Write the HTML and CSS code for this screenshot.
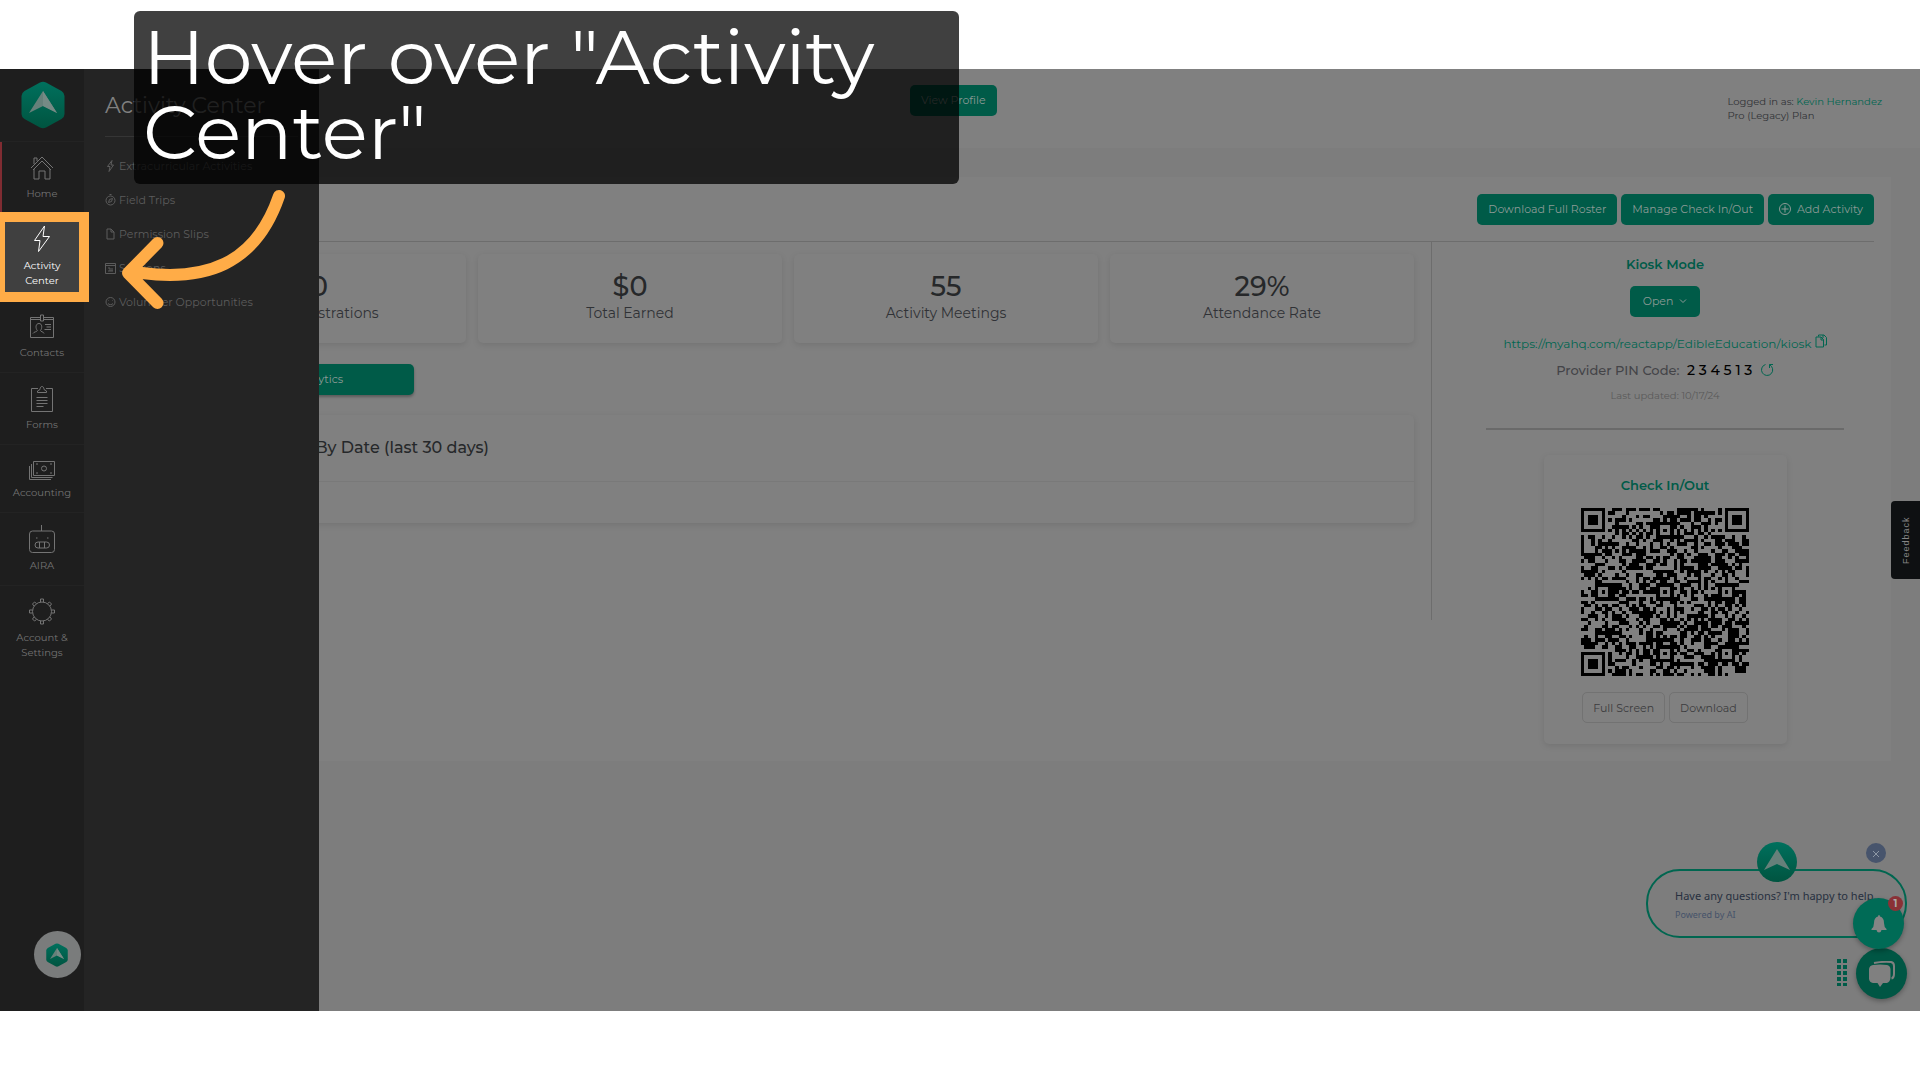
FILE: index.html
```html
<!DOCTYPE html>
<html lang="en">
<head>
    <meta charset="UTF-8">
    <meta name="viewport" content="width=device-width, initial-scale=1.0">
    <title>Activity Center</title>
    <link rel="stylesheet" href="styles.css">
</head>
<body>
    <!-- shared logo -->
    <svg width="0" height="0" class="defs">
        <defs>
            <linearGradient id="logo-green" x1="0" y1="0" x2="0" y2="1">
                <stop offset="0" stop-color="#00705d"/>
                <stop offset="1" stop-color="#005440"/>
            </linearGradient>
            <symbol id="logo" viewBox="0 0 44 48">
                <path d="M19 1.500Q22 0 25 1.500L40.500 10Q43.500 12 43.500 15V33Q43.500 36 40.500 38L25 46.500Q22 48 19 46.500L3.500 38Q.5 36 .5 33V15Q.5 12 3.500 10Z" fill="url(#logo-green)"/>
                <path d="M22 10L36 32L22 25L8 32Z" fill="#66807a"/>
                <path d="M22 10L36 32L22 25Z" fill="#758a85"/>
            </symbol>
        </defs>
    </svg>

    <div class="stage">
        <nav class="sidebar">
            <a href="#" class="logo" aria-label="Dashboard"><svg width="44" height="48"><use href="#logo"/></svg></a>
            <a href="#" class="nav-item current">
                <svg width="28" height="28" viewBox="0 0 28 28"><path d="M3 15L14 4L25 15M5 17L14 8L23 17M6 11V5H9V8M6 16V26H11V18H17V26H22V16"/></svg>
                <span>Home</span>
            </a>
            <a href="#" class="nav-item active">
                <svg width="28" height="28" viewBox="0 0 28 28"><path d="M16.500 1L6.500 15.500H12L10.500 26.500L21.500 11.500H15Z"/></svg>
                <span>Activity<br>Center</span>
            </a>
            <a href="#" class="nav-item">
                <svg width="28" height="28" viewBox="0 0 28 28"><path d="M12 5.500H2.500V25.500H25.500V5.500H16M2.500 7.500H12M16 7.500H25.500M12.500 3H15.500V9H12.500ZM5 21.500C6 19.500 9 20 9.300 18.500C7.500 16.500 7.300 11.500 11 11.500C14.500 11.500 14.200 16.500 12.500 18.500C12.700 20 15.500 19.500 16 21.500M17 12.500H23M18.500 15H23M16.500 17.500H23"/></svg>
                <span>Contacts</span>
            </a>
            <a href="#" class="nav-item">
                <svg width="28" height="28" viewBox="0 0 28 28"><path d="M10 4.500H3.500V27.500H24.500V4.500H18M9.500 8.500V7L12 5.500C12 1.500 16 1.500 16 5.500L18.500 7V8.500ZM8.500 13.500H19.500M8.500 16.500H19.500M8.500 19.500H19.500M8.500 22.500H15.500"/></svg>
                <span>Forms</span>
            </a>
            <a href="#" class="nav-item">
                <svg width="28" height="24" viewBox="0 0 28 24"><path d="M5.500 5.500H26.500V19.500H5.500ZM3.500 8V21.500H24.500M1.500 10V23.500H23M8 8H10M22 8H24M8 17H10M22 17H24"/><circle cx="16" cy="12.500" r="2.500"/></svg>
                <span>Accounting</span>
            </a>
            <a href="#" class="nav-item">
                <svg width="28" height="29" viewBox="0 0 28 29"><path d="M13.500 1V7"/><rect x="1.500" y="7" width="25" height="21.500" rx="3"/><rect x="7" y="18" width="14.500" height="6" rx="3"/><path d="M11.500 18V24M16.500 18V24M8 14H9.500M19 14H20.500"/></svg>
                <span>AIRA</span>
            </a>
            <a href="#" class="nav-item">
                <svg width="28" height="28" viewBox="0 0 28 28"><circle cx="14" cy="14.500" r="9.500"/><path d="M12.500 5V2H15.500V5M12.500 24V27H15.500V24M4.500 13H1.500V16H4.500M23.500 13H26.500V16H23.500M6 9L4.500 7L6.500 5L8.500 6.500M19.500 6.500L21.500 5L23.500 7L22 9M6 20L4.500 22L6.500 24L8.500 22.500M19.500 22.500L21.500 24L23.500 22L22 20"/></svg>
                <span>Account &amp;<br>Settings</span>
            </a>
        </nav>

        <div class="content">
            <header class="topbar">
                <button type="button" class="btn">View Profile</button>
                <div class="account">
                    Logged in as: <a href="#">Kevin Hernandez</a><br>
                    Pro (Legacy) Plan
                </div>
            </header>

            <main class="panel">
                <div class="actions">
                    <button type="button" class="btn">Download Full Roster</button>
                    <button type="button" class="btn">Manage Check In/Out</button>
                    <button type="button" class="btn"><svg width="12" height="12" viewBox="0 0 12 12"><circle cx="6" cy="6" r="5.500"/><path d="M6 2.500V9.500M2.500 6H9.500"/></svg> Add Activity</button>
                </div>

                <div class="columns">
                    <section class="stats">
                        <div class="cards">
                            <div class="card"><strong>10</strong><span>Total Registrations</span></div>
                            <div class="card"><strong>$0</strong><span>Total Earned</span></div>
                            <div class="card"><strong>55</strong><span>Activity Meetings</span></div>
                            <div class="card"><strong>29%</strong><span>Attendance Rate</span></div>
                        </div>
                        <button type="button" class="btn analytics">View More Analytics</button>
                        <div class="chart">
                            <h2>Registrations By Date (last 30 days)</h2>
                        </div>
                    </section>

                    <aside class="kiosk">
                        <h3>Kiosk Mode</h3>
                        <button type="button" class="btn open">Open <svg width="8" height="8" viewBox="0 0 8 8"><path d="M1 2.500L4 5.500L7 2.500"/></svg></button>
                        <p class="kiosk-url"><a href="#">https://myahq.com/reactapp/EdibleEducation/kiosk</a>
                            <svg width="12" height="14" viewBox="0 0 12 14"><path d="M3.500 2.500V1H9L11.500 3.500V11H9.500M1 3H6L8.500 5.500V13H1ZM6 3V6H8.500M8 1V4"/></svg>
                        </p>
                        <p class="pin">Provider PIN Code: <b>2 3 4 5 1 3</b>
                            <svg width="14" height="14" viewBox="0 0 14 14"><path d="M5.500 1.500A5.600 5.600 0 1 0 9.500 1.800M9.500 5V1.500H13"/></svg>
                        </p>
                        <p class="updated">Last updated: 10/17/24</p>
                        <hr>
                        <div class="checkin">
                            <h3>Check In/Out</h3>
                            <svg id="qr" width="168" height="168" viewBox="0 0 49 49" role="img" aria-label="Check in QR code"></svg>
                            <div class="checkin-actions">
                                <button type="button" class="btn-outline">Full Screen</button>
                                <button type="button" class="btn-outline">Download</button>
                            </div>
                        </div>
                    </aside>
                </div>
            </main>
        </div>

        <div class="submenu">
            <h1>Activity Center</h1>
            <ul>
                <li><a href="#"><svg width="11" height="12" viewBox="0 0 11 12"><path d="M7 .5L2.500 6.500H5L4 11.500L8.500 5H6Z"/></svg>Extracurricular Activities</a></li>
                <li><a href="#"><svg width="11" height="12" viewBox="0 0 11 12"><circle cx="5.500" cy="6.500" r="4.500"/><path d="M7.500 4.500L6.500 7.500L3.500 8.500L4.500 5.500ZM4.500 .5H6.500"/></svg>Field Trips</a></li>
                <li><a href="#"><svg width="11" height="12" viewBox="0 0 11 12"><path d="M2 1H6L9 4V11H2ZM6 1V4H9"/></svg>Permission Slips</a></li>
                <li><a href="#"><svg width="11" height="12" viewBox="0 0 11 12"><path d="M.5 1.500H10.500V11.500H.5ZM.5 3.500H10.500M3 6H5V9M7 6V9M3 9H8"/></svg>Sessions</a></li>
                <li><a href="#"><svg width="11" height="12" viewBox="0 0 11 12"><circle cx="5.500" cy="6" r="4.500"/><path d="M3.500 4.500V5M7.500 4.500V5M3 7.500C4 9 7 9 8 7.500"/></svg>Volunteer Opportunities</a></li>
            </ul>
        </div>

        <button type="button" class="help" aria-label="Help"><svg width="22" height="24"><use href="#logo"/></svg></button>
        <button type="button" class="feedback">Feedback</button>

        <div class="chat-bubble">
            <p>Have any questions? I'm happy to help.</p>
            <small>Powered by AI</small>
            <svg class="chat-avatar" width="40" height="40" viewBox="0 0 40 40"><circle cx="20" cy="20" r="20" fill="url(#logo-green)"/><path d="M20 7L33 28L20 22L7 28Z" fill="#66807a"/></svg>
        </div>
        <button type="button" class="chat-close" aria-label="Close"><svg width="8" height="8" viewBox="0 0 8 8"><path d="M1 1L7 7M7 1L1 7"/></svg></button>
        <svg class="grip" width="10" height="27" viewBox="0 0 10 27"><path d="M2 0V27M8 0V27"/></svg>
        <button type="button" class="round chat" aria-label="Chat"><svg width="27" height="26" viewBox="0 0 27 26"><path d="M6 2Q13 .5 23 1Q26 1.500 26 5V13Q26 17 23.500 17.500" fill="none" stroke="#808080" stroke-width="2"/><path d="M5 4Q12 3 19 4Q22 4.500 22.500 8V17Q22 21 19 22H15L12 26L9.500 22H5Q1.500 21.500 1 18V8Q1.500 4.500 5 4Z" fill="#808080"/></svg></button>
        <button type="button" class="round bell" aria-label="Notifications"><svg width="16" height="18" viewBox="0 0 16 18"><path d="M8 0Q9 0 9 1.500Q13 2.500 13 8Q13 12 15.500 14V15H10.500Q10 17.500 8 17.500Q6 17.500 5.500 15H.5V14Q3 12 3 8Q3 2.500 7 1.500Q7 0 8 0Z" fill="#858585"/></svg><span class="badge">1</span></button>
    </div>

    <!-- walkthrough step -->
    <div class="highlight"></div>
    <div class="tip">Hover over "Activity Center"</div>
    <svg class="arrow" width="180" height="140" viewBox="0 0 180 140"><path d="M163 12C139 82 88 97 26 89M41.500 59L12 89L41.500 119"/></svg>

    <script src="qr.js"></script>
</body>
</html>
```
FILE: styles.css
```css
* {
    box-sizing: border-box;
}
body {
    margin: 0;
    padding: 69px 0;
    min-height: 100vh;
    display: flex;
    position: relative;
    overflow: hidden;
    background: #fff;
    font-family: Montserrat, Inter, sans-serif;
    font-size: 11px;
    color: #303236;
}
a {
    color: #006650;
    text-decoration: none;
}
button {
    font-family: inherit;
    cursor: pointer;
}
svg {
    fill: none;
    stroke: currentColor;
    flex: none;
}
use,
.chat-avatar,
.round svg {
    stroke: none;
}
.defs {
    position: absolute;
}
.stage {
    flex: 1;
    display: flex;
    position: relative;
    overflow: hidden;
    background: #7d7d7d;
}

/* sidebar */
.sidebar {
    width: 84px;
    background: #1e1e1e;
}
.logo {
    display: flex;
    justify-content: center;
    height: 72px;
    padding: 12px 0 0 2px;
}
.nav-item {
    display: flex;
    flex-direction: column;
    align-items: center;
    gap: 5px;
    padding: 11px 0 12px;
    border-top: 1px solid #232323;
    color: #747474;
    font-size: 10px;
    line-height: 15px;
    text-align: center;
}
.nav-item.current {
    box-shadow: inset 2px 0 #802c32;
}
.nav-item.active {
    background: #404040;
    color: #fff;
}

/* submenu lies over the content */
.submenu {
    position: absolute;
    left: 84px;
    top: 0;
    bottom: 0;
    width: 235px;
    padding: 22px 21px;
    background: #242424;
}
.submenu h1 {
    margin: 0 0 12px;
    padding-bottom: 16px;
    border-bottom: 1px solid #353535;
    color: #808080;
    font-size: 22px;
    font-weight: 400;
    line-height: 29px;
}
.submenu ul {
    list-style: none;
    margin: 0;
    padding: 0;
}
.submenu a {
    display: flex;
    align-items: center;
    gap: 3px;
    height: 34px;
    color: #5c5c5c;
}

/* content */
.content {
    flex: 1;
}
.topbar {
    display: flex;
    justify-content: space-between;
    height: 79px;
    padding: 16px 38px 0 826px;
    background: #808080;
}
.account {
    padding-top: 10px;
    font-size: 10px;
    line-height: 14px;
}
.btn {
    height: 31px;
    padding: 0 11px 1px;
    border: 0;
    border-radius: 5px;
    background: #005b48;
    color: #8c9a96;
    font-size: 11px;
}
.panel {
    margin: 29px 29px 0 61px;
    padding: 17px;
    background: #808080;
}
.actions {
    display: flex;
    justify-content: flex-end;
    gap: 4px;
    padding-bottom: 16px;
    border-bottom: 1px solid #6d6d6d;
}
.actions svg {
    margin-right: 3px;
    vertical-align: -2px;
}
.columns {
    display: flex;
    align-items: flex-start;
}
.stats {
    flex: 1;
    min-height: 378px;
    padding: 12px 17px 0 0;
    border-right: 1px solid #6d6d6d;
}
.cards {
    display: grid;
    grid-template-columns: repeat(4, 1fr);
    gap: 12px;
}
.card,
.chart,
.checkin {
    border-radius: 5px;
    background: #808080;
    box-shadow: 0 2px 6px rgba(0, 0, 0, 0.1);
}
.card {
    display: flex;
    flex-direction: column;
    align-items: center;
    height: 89px;
    padding-top: 16px;
}
.card strong {
    color: #26282a;
    font-size: 27px;
    font-weight: 500;
    line-height: 33px;
}
.card span {
    font-size: 14px;
    line-height: 20px;
}
.analytics {
    display: block;
    width: 252px;
    margin: 21px 0 20px;
    box-shadow: 0 2px 3px rgba(0, 0, 0, 0.3);
}
.chart {
    height: 108px;
}
.chart h2 {
    margin: 0;
    padding: 0 42px;
    border-bottom: 1px solid #797979;
    color: #26282a;
    font-size: 16px;
    font-weight: 500;
    line-height: 66px;
}

/* kiosk column */
.kiosk {
    width: 442px;
    padding: 12px 30px 0 54px;
    text-align: center;
}
.kiosk h3 {
    margin: 0;
    color: #005b48;
    font-size: 13px;
    font-weight: 600;
    line-height: 20px;
}
.kiosk p {
    margin: 0;
}
.open {
    width: 70px;
    margin: 12px 0 15px;
    white-space: nowrap;
}
.open svg {
    margin-left: 3px;
}
.kiosk-url {
    white-space: nowrap;
    font-size: 12px;
    line-height: 24px;
    color: #006650;
}
.kiosk-url svg {
    vertical-align: 0;
}
.kiosk .pin {
    margin-top: 2px;
    color: #444448;
    font-size: 13px;
    font-weight: 500;
    line-height: 24px;
}
.pin b {
    margin: 0 4px;
    color: #000;
    font-size: 14px;
    font-weight: 500;
}
.pin svg {
    color: #006650;
    vertical-align: -2px;
}
.kiosk .updated {
    margin-top: 6px;
    color: #5a5a5a;
    font-size: 10px;
    line-height: 16px;
}
.kiosk hr {
    height: 2px;
    margin: 24px 0 25px;
    border: 0;
    background: #6a6a6a;
}
.checkin {
    display: flex;
    flex-direction: column;
    align-items: center;
    gap: 13px;
    width: 243px;
    margin: 0 auto;
    padding: 20px 0;
}
#qr {
    stroke: none;
    fill: #000;
}
.checkin-actions {
    display: flex;
    gap: 4px;
    padding: 3px 0 1px;
}
.btn-outline {
    height: 31px;
    padding: 0 10px;
    border: 1px solid #727272;
    border-radius: 5px;
    background: none;
    color: #3c3c3e;
    font-size: 11px;
}

/* floating widgets */
.help {
    position: absolute;
    left: 34px;
    bottom: 33px;
    width: 47px;
    height: 47px;
    padding: 3px 1px 0 0;
    border: 0;
    border-radius: 50%;
    background: #7a7c7c;
}
.feedback {
    position: absolute;
    right: 0;
    top: 432px;
    width: 29px;
    height: 78px;
    padding: 0;
    border: 0;
    border-radius: 0 4px 4px 0;
    background: #0e1012;
    color: #858585;
    font-family: "Liberation Sans", sans-serif;
    font-size: 9px;
    letter-spacing: 1px;
    writing-mode: vertical-rl;
    transform: rotate(180deg);
}
.chat-bubble {
    position: absolute;
    right: 13px;
    bottom: 73px;
    width: 261px;
    height: 69px;
    padding: 16px 0 0 27px;
    border: 2px solid #006650;
    border-radius: 34px;
    color: #273040;
    font-family: "Noto Sans", sans-serif;
    font-size: 11px;
}
.chat-bubble p {
    margin: 0;
    line-height: 18px;
}
.chat-bubble small {
    color: #46536a;
    font-size: 9px;
    line-height: 19px;
    display: block;
}
.chat-avatar {
    position: absolute;
    left: 109px;
    top: -29px;
}
.chat-close {
    position: absolute;
    right: 34px;
    bottom: 148px;
    width: 20px;
    height: 20px;
    padding: 0;
    border: 0;
    border-radius: 50%;
    background: #47546c;
    color: #8d97a5;
    line-height: 8px;
}
.grip {
    position: absolute;
    right: 73px;
    bottom: 25px;
    color: #005b48;
    stroke-width: 4;
    stroke-dasharray: 4 2;
}
.round {
    position: absolute;
    width: 51px;
    height: 51px;
    padding: 0;
    border: 0;
    border-radius: 50%;
    background: #006b56;
    box-shadow: 0 2px 5px rgba(0, 0, 0, 0.3);
}
.bell {
    right: 16px;
    bottom: 62px;
}
.round svg {
    vertical-align: middle;
}
.chat {
    right: 13px;
    bottom: 12px;
    background: #005644;
}
.badge {
    position: absolute;
    right: 1px;
    top: -2px;
    width: 15px;
    height: 15px;
    border-radius: 50%;
    background: #8a3136;
    color: #a8a8a8;
    font-size: 10px;
    font-weight: 700;
    line-height: 15px;
}

/* walkthrough step */
.highlight {
    position: absolute;
    left: -5px;
    top: 212px;
    width: 94px;
    height: 90px;
    border: 10px solid #ffac47;
}
.tip {
    position: absolute;
    left: 134px;
    top: 11px;
    width: 825px;
    height: 173px;
    padding: 8px 9px;
    border-radius: 6px;
    background: rgba(0, 0, 0, 0.75);
    color: #fff;
    font-size: 76px;
    line-height: 75px;
}
.arrow {
    position: absolute;
    left: 116px;
    top: 184px;
    color: #ffac47;
    stroke-width: 12;
    stroke-linecap: round;
    stroke-linejoin: round;
}
```
FILE: qr.js
```js
const SIZE = 49;
const cells = [];
let seed = 20241017;

function random() {
    seed = (seed * 1103515245 + 12345) % 2147483648;
    return seed / 2147483648;
}

for (let y = 0; y < SIZE; y++) {
    cells.push([]);
    for (let x = 0; x < SIZE; x++) {
        cells[y].push(random() > 0.48);
    }
}

// timing lines
for (let i = 0; i < SIZE; i++) {
    cells[6][i] = i % 2 === 0;
    cells[i][6] = i % 2 === 0;
}

// square rings around a centre, blanks = rings left empty
function rings(cx, cy, radius, blanks) {
    for (let y = cy - radius; y <= cy + radius; y++) {
        for (let x = cx - radius; x <= cx + radius; x++) {
            if (x < 0 || y < 0 || x >= SIZE || y >= SIZE) continue;
            const d = Math.max(Math.abs(x - cx), Math.abs(y - cy));
            cells[y][x] = !blanks.includes(d);
        }
    }
}

[[24, 6], [6, 24], [24, 24], [42, 24], [24, 42], [42, 42]].forEach(p => rings(p[0], p[1], 2, [1]));
[[3, 3], [45, 3], [3, 45]].forEach(p => rings(p[0], p[1], 4, [2, 4]));

// one bar per run of dark cells
let path = "";
cells.forEach((row, y) => {
    for (let x = 0; x < SIZE; x++) {
        if (!row[x]) continue;
        const start = x;
        while (x < SIZE && row[x]) x++;
        path += `M${start} ${y}H${x}V${y + 1}H${start}Z`;
    }
});
document.getElementById("qr").innerHTML = `<path d="${path}" shape-rendering="crispEdges"/>`;
```
